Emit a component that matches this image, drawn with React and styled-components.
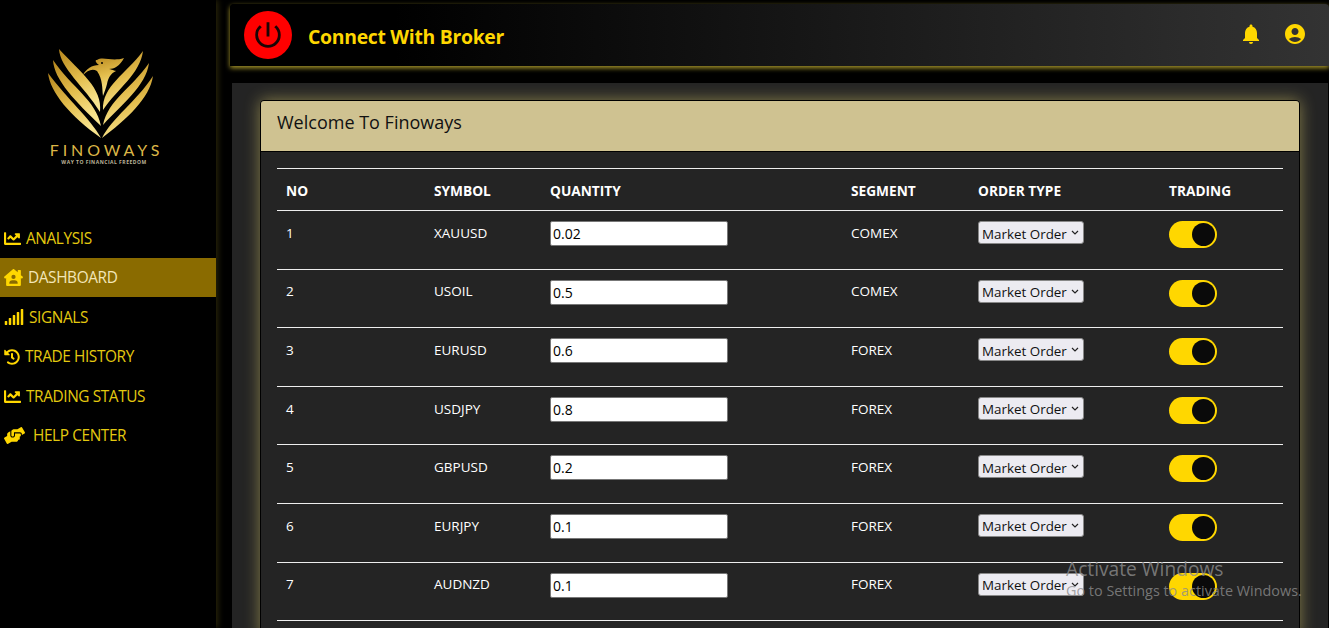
import React from 'react'
import styled, { createGlobalStyle } from 'styled-components'
import { FaChartLine, FaHouseUser, FaSignal, FaHistory, FaHandsHelping } from 'react-icons/fa'
import { MdPowerSettingsNew, MdNotifications, MdAccountCircle } from 'react-icons/md'

const NAV = [
  { label: 'ANALYSIS', icon: FaChartLine, size: 17 },
  { label: 'DASHBOARD', icon: FaHouseUser, size: 19, active: true },
  { label: 'SIGNALS', icon: FaSignal, size: 20 },
  { label: 'TRADE HISTORY', icon: FaHistory, size: 16 },
  { label: 'TRADING STATUS', icon: FaChartLine, size: 17 },
  { label: 'HELP CENTER', icon: FaHandsHelping, size: 21, wide: true },
]

const ROWS = [
  ['1', 'XAUUSD', '0.02', 'COMEX'],
  ['2', 'USOIL', '0.5', 'COMEX'],
  ['3', 'EURUSD', '0.6', 'FOREX'],
  ['4', 'USDJPY', '0.8', 'FOREX'],
  ['5', 'GBPUSD', '0.2', 'FOREX'],
  ['6', 'EURJPY', '0.1', 'FOREX'],
  ['7', 'AUDNZD', '0.1', 'FOREX'],
]

function Logo() {
  return (
    <LogoBox>
      <LogoMark width="120" height="96" viewBox="40 47 120 96">
        <defs>
          <linearGradient id="gold" x1="0" y1="0" x2="0.3" y2="1">
            <stop offset="0" stopColor="#b5851c" />
            <stop offset="0.55" stopColor="#e3bd4c" />
            <stop offset="1" stopColor="#f8e48e" />
          </linearGradient>
        </defs>
        <g fill="url(#gold)">
          <path d="M48 73C50 92 70 116 101 138C90 118 68 100 48 73Z" />
          <path d="M53 60C54 80 76 102 101 126C96 100 72 88 53 60Z" />
          <path d="M59 49C60 68 84 86 100 112C103 88 80 72 59 49Z" />
          <path d="M153 76C150 98 126 120 102 138C112 118 136 102 153 76Z" />
          <path d="M149 63C146 86 122 104 103 125C108 100 132 88 149 63Z" />
          <path d="M143 51C140 74 118 88 103 110C102 86 126 74 143 51Z" />
          <path d="M83 75C86 69 92 65 99 65C95 62 95 60 97 60C103 56 112 62 124 58C120 66 114 69 109 69C113 70 116 71 116 71C111 73 108 78 107 84C106 88 104 93 103 96C102 88 103 80 97 71C92 68 87 71 83 75Z" />
        </g>
        <circle cx="102" cy="63" r="1" fill="#000" />
      </LogoMark>
      <LogoName>FINOWAYS</LogoName>
      <LogoTag>WAY TO FINANCIAL FREEDOM</LogoTag>
    </LogoBox>
  )
}

function App() {
  return (
    <Page>
      <GlobalStyle />
      <Sidebar>
        <Logo />
        <Nav>
          {NAV.map((item) => (
            <NavItem key={item.label} $active={item.active} $wide={item.wide}>
              <item.icon size={item.size} />
              <span>{item.label}</span>
            </NavItem>
          ))}
        </Nav>
      </Sidebar>
      <Main>
        <Header>
          <PowerButton>
            <MdPowerSettingsNew size={34} />
          </PowerButton>
          <HeaderTitle>Connect With Broker</HeaderTitle>
          <HeaderIcons>
            <MdNotifications size={24} />
            <MdAccountCircle size={24} />
          </HeaderIcons>
        </Header>
        <Panel>
          <Card>
            <CardHead>Welcome To Finoways</CardHead>
            <CardBody>
              <Table>
                <colgroup>
                  <col width="148" />
                  <col width="116" />
                  <col width="301" />
                  <col width="127" />
                  <col width="191" />
                  <col width="123" />
                </colgroup>
                <thead>
                  <tr>
                    <Th>NO</Th>
                    <Th>SYMBOL</Th>
                    <Th>QUANTITY</Th>
                    <Th>SEGMENT</Th>
                    <Th>ORDER TYPE</Th>
                    <Th>TRADING</Th>
                  </tr>
                </thead>
                <tbody>
                  {ROWS.map(([no, symbol, qty, segment]) => (
                    <tr key={no}>
                      <TextCell>{no}</TextCell>
                      <TextCell>{symbol}</TextCell>
                      <Td><QtyInput defaultValue={qty} /></Td>
                      <TextCell>{segment}</TextCell>
                      <Td>
                        <SelectWrap>
                          <OrderSelect defaultValue="Market Order">
                            <option>Market Order</option>
                            <option>Limit Order</option>
                          </OrderSelect>
                          <Chevron width="8" height="5" viewBox="0 0 8 5">
                            <path d="M1 1l3 3 3-3" fill="none" stroke="#222" strokeWidth="1.2" />
                          </Chevron>
                        </SelectWrap>
                      </Td>
                      <Td>
                        <Toggle><Knob /></Toggle>
                      </Td>
                    </tr>
                  ))}
                </tbody>
              </Table>
            </CardBody>
          </Card>
        </Panel>
      </Main>
      <Watermark>
        <strong>Activate Windows</strong>
        <span>Go to Settings to activate Windows.</span>
      </Watermark>
    </Page>
  )
}

export default App

const GlobalStyle = createGlobalStyle`
  html, body {
    margin: 0;
    height: 100%;
    overflow: hidden;
    background: #000;
    font-family: "Open Sans", "Noto Sans", "Liberation Sans", sans-serif;
  }
`

const Page = styled.div`
  display: flex;
  height: 628px;
  overflow: hidden;
  position: relative;
  background: #000;
`

const Sidebar = styled.aside`
  width: 216px;
  flex-shrink: 0;
  background: #000;
  box-shadow: 2px 0 6px rgba(120, 110, 30, 0.35);
  z-index: 1;
`

const LogoBox = styled.div`
  height: 218.4px;
  padding-top: 47px;
  box-sizing: border-box;
  display: flex;
  flex-direction: column;
  align-items: center;
  padding-right: 8px;
`

const LogoMark = styled.svg`
  display: block;
  margin-left: -8px;
`

const LogoName = styled.div`
  margin-top: -2px;
  font-family: "Lato", sans-serif;
  font-weight: 400;
  font-size: 16px;
  line-height: 18px;
  letter-spacing: 3.9px;
  color: #dcb747;
  padding-left: 5px;
`

const LogoTag = styled.div`
  font-size: 5px;
  line-height: 7px;
  font-weight: 700;
  letter-spacing: 0.5px;
  color: #bdb49a;
  white-space: nowrap;
`

const Nav = styled.nav`
  display: flex;
  flex-direction: column;
`

const NavItem = styled.div`
  height: 39.5px;
  padding-left: 4px;
  display: flex;
  align-items: center;
  gap: ${(p) => (p.$wide ? '8px' : '5px')};
  font-size: 15.4px;
  letter-spacing: -0.4px;
  color: ${(p) => (p.$active ? '#f2e6b8' : '#e3c90f')};
  background: ${(p) => (p.$active ? '#8a6b00' : 'transparent')};

  svg {
    color: #ffd700;
    flex-shrink: 0;
  }
`

const Main = styled.main`
  flex: 1;
  min-width: 0;
  display: flex;
  flex-direction: column;
`

const Header = styled.header`
  height: 62px;
  margin: 4px 0 0 14px;
  padding: 0 22px 0 14px;
  flex-shrink: 0;
  display: flex;
  align-items: center;
  background: linear-gradient(90deg, #000 15%, #333 100%);
  border-radius: 4px 4px 0 0;
  box-shadow: 0 2px 5px rgba(200, 180, 50, 0.85);
`

const PowerButton = styled.div`
  width: 48px;
  height: 48px;
  border-radius: 50%;
  background: #ff0000;
  color: #1a0505;
  display: flex;
  align-items: center;
  justify-content: center;
`

const HeaderTitle = styled.div`
  margin: 2px 0 0 16px;
  font-size: 19.4px;
  font-weight: 700;
  letter-spacing: -0.3px;
  color: #ffd700;
`

const HeaderIcons = styled.div`
  margin: 0 0 2px auto;
  display: flex;
  gap: 20px;
  color: #ffd700;
`

const Panel = styled.section`
  flex: 1;
  margin: 17px 1px 0 16px;
  padding: 17px 28px 0;
  background: #242424;
  overflow: hidden;
`

const Card = styled.div`
  border: 1px solid #000;
  border-radius: 4px;
  box-shadow: 0 0 16px rgba(255, 235, 120, 0.45);
  background: #242424;
`

const CardHead = styled.div`
  height: 41px;
  padding: 0 16px 9px 16px;
  display: flex;
  align-items: center;
  background: #cfc291;
  border-bottom: 1px solid #000;
  border-radius: 3px 3px 0 0;
  font-size: 18px;
  color: #111;
`

const CardBody = styled.div`
  padding: 16px 16px;
`

const Table = styled.table`
  width: 1006px;
  table-layout: fixed;
  border-collapse: collapse;
  color: #fff;
  font-size: 13.5px;
`

const Th = styled.th`
  height: 39px;
  padding: 2px 9px 0;
  text-align: left;
  font-size: 13.7px;
  font-weight: 700;
  border-top: 1px solid #eee;
  border-bottom: 1px solid #eee;
`

const Td = styled.td`
  height: 58.6px;
  padding: 10px 9px 0;
  vertical-align: top;
  box-sizing: border-box;
  border-bottom: 1px solid #eee;
`

const TextCell = styled(Td)`
  padding-top: 12.8px;
`

const QtyInput = styled.input`
  width: 178px;
  height: 25px;
  box-sizing: border-box;
  padding: 1px 2px;
  border: 1px solid #777;
  border-radius: 2px;
  background: #fff;
  color: #000;
  font: inherit;
  font-size: 14px;
  display: block;
`

const SelectWrap = styled.div`
  position: relative;
  width: 106px;
`

const OrderSelect = styled.select`
  appearance: none;
  width: 106px;
  height: 23px;
  padding: 2px 0 0 3px;
  border: 1px solid #888;
  border-radius: 3px;
  background-color: #ecebf1;
  color: #111;
  font: inherit;
  font-size: 13.4px;
  display: block;
`

const Chevron = styled.svg`
  position: absolute;
  right: 5px;
  top: 9px;
`

const Toggle = styled.div`
  width: 48px;
  height: 27px;
  border-radius: 14px;
  background: #ffd700;
  display: flex;
  align-items: center;
  justify-content: flex-end;
  padding-right: 2px;
  box-sizing: border-box;
`

const Knob = styled.div`
  width: 23px;
  height: 23px;
  border-radius: 50%;
  background: #0a0a0a;
`

const Watermark = styled.div`
  position: absolute;
  left: 1066px;
  top: 557px;
  display: flex;
  flex-direction: column;
  color: rgba(140, 140, 140, 0.8);
  pointer-events: none;
  z-index: 5;
  white-space: nowrap;

  strong {
    font-weight: 400;
    font-size: 19.2px;
    line-height: 24px;
  }

  span {
    font-size: 14.4px;
    line-height: 20px;
  }
`
